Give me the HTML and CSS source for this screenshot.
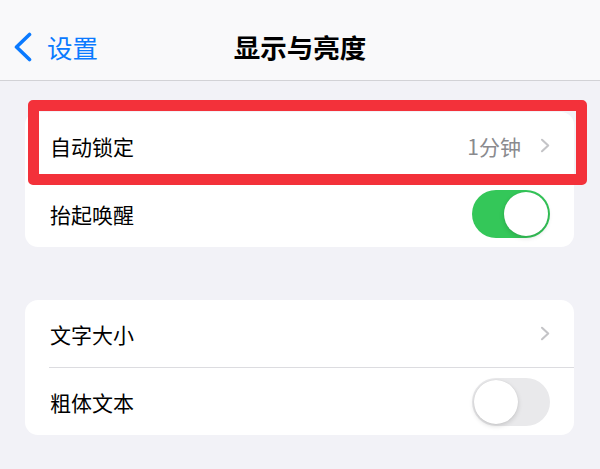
FILE: index.html
```html
<!DOCTYPE html>
<html lang="zh-CN">
<head>
<meta charset="utf-8">
<title>显示与亮度</title>
<link rel="stylesheet" href="styles.css">
</head>
<body>
<header class="nav">
  <a class="back" href="#">
    <svg class="back-icon" width="20" height="30" viewBox="0 0 20 30"><polyline points="16.5,2.5 3.5,15 16.5,27.5" fill="none" stroke="#0a7aff" stroke-width="3.6" stroke-linecap="round" stroke-linejoin="round"/></svg>
    <span class="back-label">设置</span>
  </a>
  <h1 class="title">显示与亮度</h1>
  <span class="nav-spacer"></span>
</header>
<main class="content">
  <section class="card">
    <div class="row">
      <span class="label">自动锁定</span>
      <span class="value">1分钟</span>
      <svg class="chev" width="11" height="15" viewBox="0 0 11 15"><polyline points="2,1.8 8.2,7.5 2,13.2" fill="none" stroke="#c4c4c7" stroke-width="2.1" stroke-linecap="round" stroke-linejoin="round"/></svg>
    </div>
    <div class="sep"></div>
    <div class="row">
      <span class="label">抬起唤醒</span>
      <span class="toggle on"><span class="knob"></span></span>
    </div>
    <div class="highlight"></div>
  </section>
  <section class="card">
    <div class="row">
      <span class="label">文字大小</span>
      <svg class="chev" width="11" height="15" viewBox="0 0 11 15"><polyline points="2,1.8 8.2,7.5 2,13.2" fill="none" stroke="#c4c4c7" stroke-width="2.1" stroke-linecap="round" stroke-linejoin="round"/></svg>
    </div>
    <div class="sep"></div>
    <div class="row">
      <span class="label">粗体文本</span>
      <span class="toggle"><span class="knob"></span></span>
    </div>
  </section>
</main>
</body>
</html>
```
FILE: styles.css
```css
* { box-sizing: border-box; }
html, body { margin: 0; padding: 0; }
body {
  background: #f2f2f7;
  font-family: "Noto Sans CJK SC", "Noto Sans", sans-serif;
  color: #000;
  width: 600px;
  height: 469px;
  overflow: hidden;
}
.nav {
  height: 81px;
  padding-top: 14px;
  background: #f9f9fa;
  border-bottom: 1px solid #d2d2d6;
  display: grid;
  grid-template-columns: 1fr auto 1fr;
  align-items: center;
}
.back {
  display: flex;
  align-items: center;
  gap: 14px;
  padding-left: 13px;
  text-decoration: none;
  color: #0a7aff;
}
.back-icon { display: block; }
.back-label {
  font-size: 25.5px;
  line-height: 30px;
}
.title {
  margin: 0;
  font-size: 26.5px;
  font-weight: 700;
  line-height: 30px;
}
.content {
  padding: 31px 26px 0 25px;
  display: flex;
  flex-direction: column;
  gap: 53px;
}
.card {
  position: relative;
  background: #fff;
  border-radius: 13px;
}
.row {
  height: 67px;
  display: flex;
  align-items: center;
  padding: 0 24px 0 25px;
}
.label {
  flex: 1;
  font-size: 21px;
  line-height: 28px;
}
.value {
  font-size: 21px;
  line-height: 28px;
  color: #8a8a8e;
  margin-right: 19px;
}
.chev { display: block; margin-right: -1px; }
.sep {
  height: 1px;
  background: #dcdce0;
  margin-left: 24px;
}
.toggle {
  position: relative;
  width: 78px;
  height: 48px;
  border-radius: 24px;
  background: #e9e9eb;
}
.toggle.on { background: #34c759; }
.knob {
  position: absolute;
  top: 2px;
  left: 2px;
  width: 44px;
  height: 44px;
  border-radius: 50%;
  background: #fff;
  box-shadow: 0 2px 5px rgba(0,0,0,0.15), 0 0 1px rgba(0,0,0,0.12);
}
.toggle.on .knob { left: 32px; }
.highlight {
  position: absolute;
  left: 3px;
  top: -12px;
  width: 559px;
  height: 85px;
  border: 11px solid #f3313a;
  border-radius: 5px;
  pointer-events: none;
}
```
